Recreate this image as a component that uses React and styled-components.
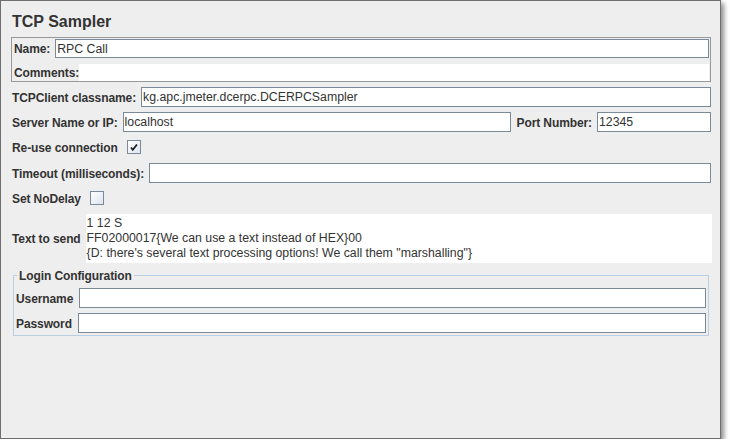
import React from 'react';
import styled, { createGlobalStyle } from 'styled-components';

const GlobalStyle = createGlobalStyle`
  html, body {
    margin: 0;
    padding: 0;
    background: #ffffff;
  }
  body {
    font-family: "Liberation Sans", Arial, sans-serif;
  }
`;

// Outer window with its drop shadow
const Window = styled.div`
  box-sizing: border-box;
  width: 721px;
  height: 439px;
  background: #eeeeee;
  border: 1px solid #6e6e6e;
  box-shadow: 3px 3px 5px rgba(0, 0, 0, 0.45);
  padding: 0 9px 0 10px;
  display: flex;
  flex-direction: column;
  color: #333333;
  font-family: "Liberation Sans", Arial, sans-serif;
`;

const Title = styled.div`
  margin: 11px 0 0 1px;
  font-size: 16px;
  font-weight: bold;
  line-height: 20px;
  height: 20px;
`;

const NameBox = styled.div`
  margin-top: 5px;
  border: 1px solid #999999;
  padding: 1px 1px 0 1px;
  display: flex;
  flex-direction: column;
`;

const Row = styled.div`
  display: flex;
  align-items: center;
  height: ${(p) => p.$h || 20}px;
  margin-top: ${(p) => p.$mt || 0}px;
  gap: ${(p) => (p.$gap === undefined ? 5 : p.$gap)}px;
  padding-left: ${(p) => p.$pl || 0}px;
`;

const Body = styled.div`
  display: flex;
  flex-direction: column;
  padding-left: 1px;
  margin-top: 5px;
`;

const Label = styled.span`
  font-size: 12px;
  font-weight: bold;
  letter-spacing: -0.1px;
  line-height: 15px;
  padding-top: 2px;
  white-space: nowrap;
  color: #333333;
`;

const Field = styled.div`
  box-sizing: border-box;
  flex: ${(p) => (p.$w ? 'none' : '1')};
  width: ${(p) => (p.$w ? `${p.$w}px` : 'auto')};
  height: ${(p) => p.$h || 20}px;
  background: #ffffff;
  border: 1px solid #7a8a99;
  box-shadow: inset -1px -1px 0 #ffffff;
  padding: 1px 2px 0 1px;
  font-size: 12.3px;
  line-height: ${(p) => (p.$h || 20) - 3}px;
  color: #333333;
  white-space: nowrap;
  overflow: hidden;
`;

const CommentArea = styled.div`
  flex: 1;
  align-self: stretch;
  background: #ffffff;
`;

const CheckBox = styled.span`
  box-sizing: border-box;
  display: inline-flex;
  align-items: center;
  justify-content: center;
  width: 14px;
  height: 14px;
  border: 1px solid #7a8a99;
  background: linear-gradient(135deg, #ffffff 0%, #dbe5f0 100%);
`;

const TextArea = styled.div`
  flex: 1;
  box-sizing: border-box;
  height: 49px;
  background: #ffffff;
  padding: 2px 0 0 1px;
  margin-right: -1px;
  font-size: 12.3px;
  line-height: 15px;
  color: #333333;
  white-space: pre;
`;

const Group = styled.fieldset`
  margin: 4px 2px 0 1px;
  padding: 0 2px 2px 2px;
  border: 1px solid #b8cfe5;
  min-width: 0;
  display: flex;
  flex-direction: column;
`;

const Legend = styled.legend`
  margin-left: 1px;
  padding: 2px 2px 0 2px;
  font-size: 12px;
  font-weight: bold;
  letter-spacing: -0.1px;
  line-height: 15px;
  color: #333333;
`;

const Check = ({ checked }) => (
  <CheckBox>
    {checked && (
      <svg width="12" height="12" viewBox="0 0 12 12">
        <path d="M3 6.5 L4.8 8.8 L9 3.5" fill="none" stroke="#222" strokeWidth="1.8" />
      </svg>
    )}
  </CheckBox>
);

const App = () => (
  <>
    <GlobalStyle />
    <Window>
      <Title>TCP Sampler</Title>
      <NameBox>
        <Row $h={19} $pl={1} $gap={5}>
          <Label>Name:</Label>
          <Field $h={19}>RPC Call</Field>
        </Row>
        <Row $h={17} $mt={6} $pl={1} $gap={0}>
          <Label>Comments:</Label>
          <CommentArea />
        </Row>
      </NameBox>
      <Body>
        <Row>
          <Label>TCPClient classname:</Label>
          <Field>kg.apc.jmeter.dcerpc.DCERPCSampler</Field>
        </Row>
        <Row $mt={5}>
          <Label>Server Name or IP:</Label>
          <Field>localhost</Field>
          <Label style={{ marginLeft: 1 }}>Port Number:</Label>
          <Field $w={114}>12345</Field>
        </Row>
        <Row $mt={5} $gap={9}>
          <Label>Re-use connection</Label>
          <Check checked />
        </Row>
        <Row $mt={6}>
          <Label>Timeout (milliseconds):</Label>
          <Field />
        </Row>
        <Row $mt={5} $gap={9}>
          <Label>Set NoDelay</Label>
          <Check />
        </Row>
        <Row $h={49} $mt={6} $gap={5}>
          <Label>Text to send</Label>
          <TextArea>
            {'1 12 S\nFF02000017{We can use a text instead of HEX}00\n{D: there\'s several text processing options! We call them "marshalling"}'}
          </TextArea>
        </Row>
        <Group>
          <Legend>Login Configuration</Legend>
          <Row $mt={4} $gap={6}>
            <Label>Username</Label>
            <Field />
          </Row>
          <Row $mt={5} $gap={6}>
            <Label>Password</Label>
            <Field />
          </Row>
        </Group>
      </Body>
    </Window>
  </>
);

export default App;
